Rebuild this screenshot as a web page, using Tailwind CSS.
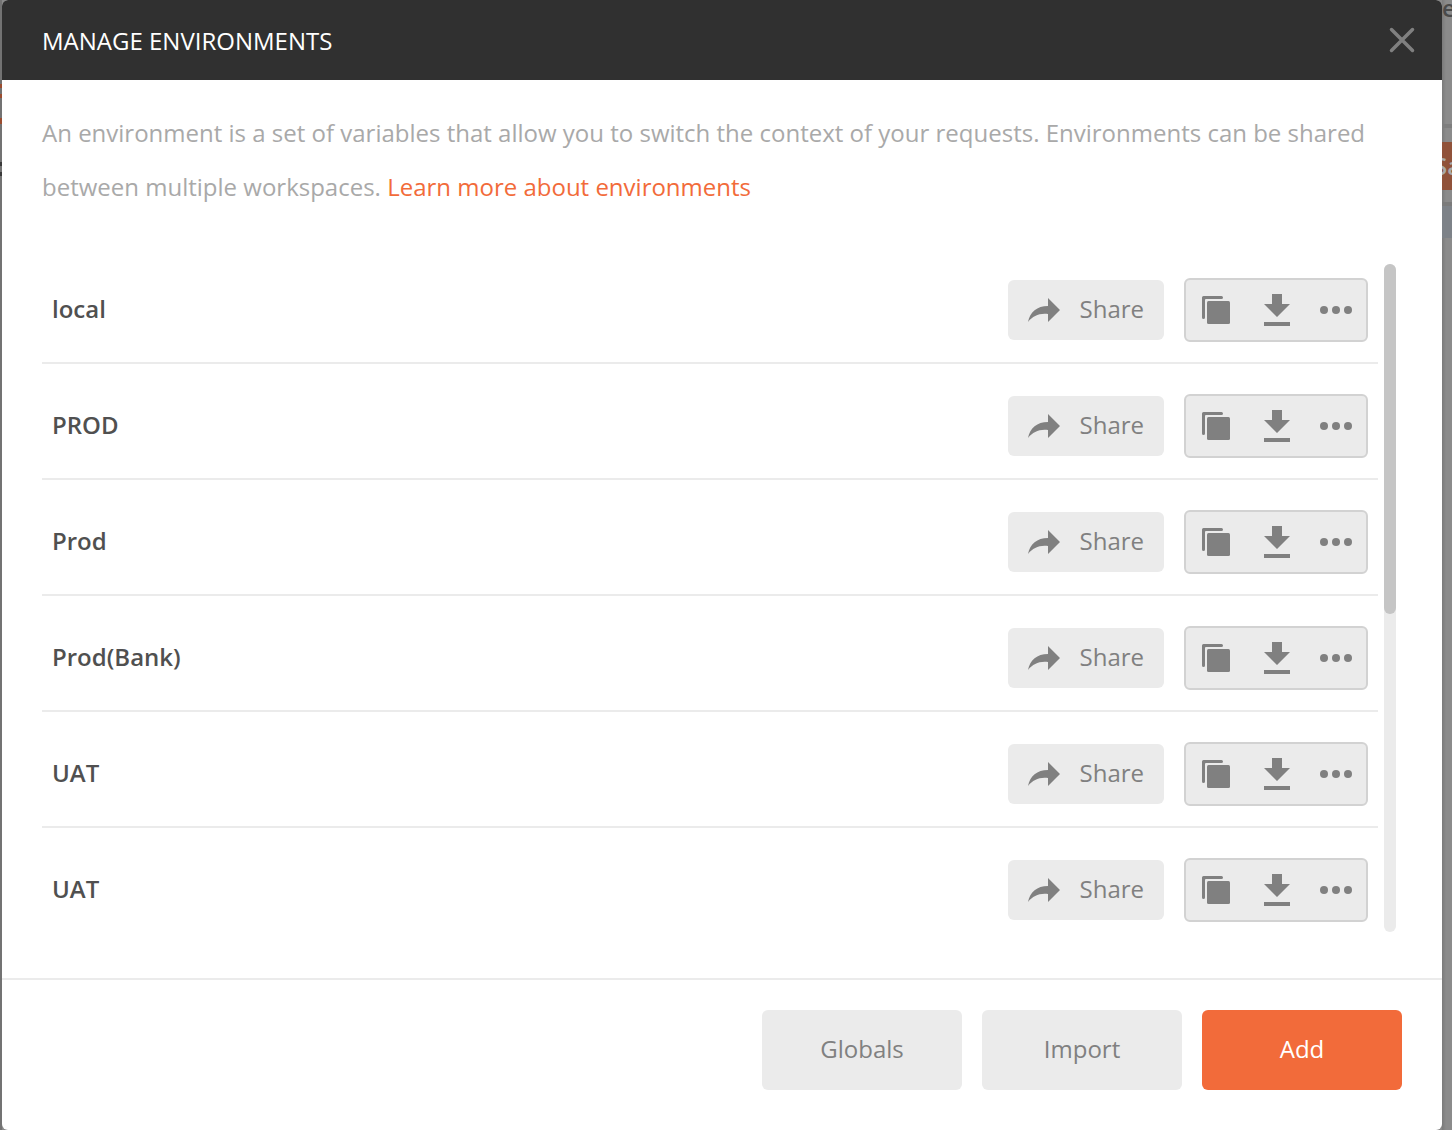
<!DOCTYPE html>
<html lang="en">
<head>
<meta charset="utf-8">
<title>Manage Environments</title>
<script src="https://cdn.jsdelivr.net/npm/@tailwindcss/browser@4"></script>
</head>
<body class="bg-[#898989] font-['Open_Sans',sans-serif] text-2xl text-[#808080]">
<svg class="hidden" aria-hidden="true">
  <symbol id="share" viewBox="0 0 32 24"><path d="M20 0 32 12 20 24v-8C11 15 5 18 0 24 2 14 9 8 20 8z"/></symbol>
  <symbol id="copy" viewBox="0 0 28 28"><path d="M1.500 0H19.500a1.500 1.500 0 0 1 0 3H4A1 1 0 0 0 3 4V21.500a1.500 1.500 0 0 1-3 0V1.500A1.500 1.500 0 0 1 1.500 0z"/><rect x="5" y="5" width="23" height="23" rx="1.500"/></symbol>
  <symbol id="download" viewBox="0 0 26 32"><path d="M8 0H18V10H26L13 23 0 10H8zM0 28H26V32H0z"/></symbol>
  <symbol id="more" viewBox="0 0 32 8"><circle cx="4" cy="4" r="4"/><circle cx="16" cy="4" r="4"/><circle cx="28" cy="4" r="4"/></symbol>
</svg>
<div class="grid min-h-screen grid-cols-[2px_minmax(0,1fr)_10px]">
  <div class="flex flex-col bg-[#737373] pt-21" aria-hidden="true">
    <div class="h-[14px] border-y-4 border-[#9b4d30]"></div>
    <div class="mt-5 h-1.5 bg-[#9b4d30]"></div>
    <div class="mt-[38px] h-[14px] border-y-4 border-[#3a3a3a]"></div>
  </div>

  <main role="dialog" aria-labelledby="title" class="z-10 flex flex-col overflow-hidden rounded-md bg-white">
    <header class="flex h-20 items-center justify-between bg-[#303030] pr-7 pl-10">
      <h1 id="title" class="pt-0.5 font-medium text-white">MANAGE ENVIRONMENTS</h1>
      <button aria-label="Close" class="text-[#808080]"><svg class="size-6 overflow-visible" viewBox="0 0 24 24" stroke="currentColor" stroke-width="3.500" stroke-linecap="round"><path d="M1.500 1.500 22.500 22.500M22.500 1.500 1.500 22.500"/></svg></button>
    </header>
    <p class="px-10 pt-[26px] leading-[54px] text-[#a9a9a9]">An environment is a set of variables that allow you to switch the context of your requests. Environments can be shared between multiple workspaces. <a href="#" class="text-[#f26b3a]">Learn more about environments</a></p>
    <section class="mt-[34px] mb-[34px] flex flex-1 pr-[46px] pl-10">
      <ul id="list" class="flex-1"></ul>
      <div class="mt-4 mb-3 ml-1.5 w-3 rounded-full bg-[#ebebeb]"><div class="h-[350px] rounded-full bg-[#c5c5c5]"></div></div>
    </section>
    <footer class="flex justify-end gap-5 border-t-2 border-[#ebebeb] px-10 pt-[30px] pb-10">
      <button class="h-20 w-50 rounded-md bg-[#ebebeb] pb-0.5">Globals</button>
      <button class="h-20 w-50 rounded-md bg-[#ebebeb] pb-0.5">Import</button>
      <button class="h-20 w-50 rounded-md bg-[#f26b3a] pb-0.5 text-white">Add</button>
    </footer>
  </main>

  <div class="flex flex-col overflow-hidden bg-linear-to-r from-[#7b7b7b] to-[#8b8b8b] to-40%" aria-hidden="true">
    <div class="h-[124px] leading-4 font-semibold text-[#4a4a4a]">e</div>
    <div class="h-1 bg-[#7e7e7e]"></div>
    <div class="mt-[14px] flex h-12 items-center bg-[#90523a] font-semibold text-[#a9a9a9]"><span class="-ml-2">Sa</span></div>
    <div class="mt-3 h-1 bg-[#7b7b7b]"></div>
    <div class="h-8 bg-[#7d8288]"></div>
  </div>
</div>

<template id="row">
  <li class="flex items-center border-b-2 border-[#ebebeb] pt-[30px] pr-2.5 pb-5 pl-2.5 last:border-b-0">
    <span class="flex-1 pb-0.5 font-semibold text-[#505050]"></span>
    <button class="flex h-15 w-39 items-center justify-between rounded-md bg-[#ebebeb] px-5 pb-0.5"><svg class="mt-0.5 h-6 w-8 fill-current"><use href="#share"/></svg>Share</button>
    <div class="ml-5 flex h-16 w-46 items-center rounded-md border-2 border-[#d2d2d2] bg-[#ebebeb] pl-4">
      <button aria-label="Duplicate"><svg class="size-7 fill-current"><use href="#copy"/></svg></button>
      <button aria-label="Download" class="ml-[34px]"><svg class="h-8 w-[26px] fill-current"><use href="#download"/></svg></button>
      <button aria-label="More actions" class="ml-[30px]"><svg class="h-2 w-8 fill-current"><use href="#more"/></svg></button>
    </div>
  </li>
</template>
<script>
  const list = document.getElementById('list');
  for (const name of ['local', 'PROD', 'Prod', 'Prod(Bank)', 'UAT', 'UAT']) {
    const row = document.getElementById('row').content.cloneNode(true);
    row.querySelector('span').textContent = name;
    list.append(row);
  }
</script>
</body>
</html>
